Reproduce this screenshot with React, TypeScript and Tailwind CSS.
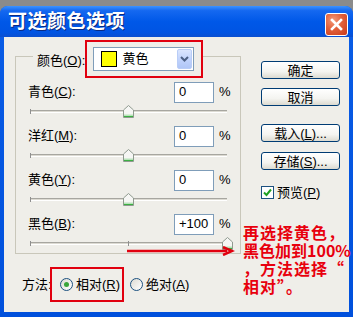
import React from "react";

const font = "font-['Liberation_Sans','Noto_Sans_CJK_SC',sans-serif]";

function Thumb() {
  return (
    <svg width="11" height="13" viewBox="0 0 11 13" className="block">
      <path d="M5.5 0.5 L10.5 5 L10.5 12.5 L0.5 12.5 L0.5 5 Z" fill="#f6f6f4" stroke="#8f9a8f" />
      <path d="M1 11 L10 11 L10 12 L1 12 Z" fill="#3cb043" />
      <path d="M1 9.5 L10 9.5 L10 11 L1 11 Z" fill="#b7e3b9" />
    </svg>
  );
}

function Slider({ pos, tick }: { pos: number; tick?: boolean }) {
  return (
    <div className="relative ml-[14px] w-[197px] h-[22px]">
      <div className="absolute left-0 right-0 top-[7px] h-[3px] border-t border-[#a7a6a0] border-b border-b-white bg-[#dcdad2]" />
      <div className="absolute left-0 top-[6px] w-px h-[5px] bg-[#8f8f8f]" />
      {tick && <div className="absolute left-[98px] top-[6px] w-px h-[5px] bg-[#8f8f8f]" />}
      <div className="absolute top-[2px]" style={{ left: pos - 5 }}>
        <Thumb />
      </div>
    </div>
  );
}

function Row({ label, u, rest, value, pos, tick }: { label: string; u: string; rest: string; value: string; pos: number; tick?: boolean }) {
  return (
    <div className="flex flex-col h-[44px]">
      <div className="flex items-center h-[22px] pl-[12px]">
        <div className="w-[146px] text-[13px] text-black">
          {label}(<span className="underline">{u}</span>){rest}
        </div>
        <div className="w-[40px] h-[21px] bg-white border border-[#7f9db9] flex items-center pl-[4px] text-[13px] text-black">
          {value}
        </div>
        <div className="ml-[5px] text-[13px] text-black">%</div>
      </div>
      <Slider pos={pos} tick={tick} />
    </div>
  );
}

function XpButton({ children }: { children: React.ReactNode }) {
  return (
    <div className="w-[79px] h-[18px] rounded-[3px] border border-[#003c74] bg-[linear-gradient(180deg,#ffffff_0%,#f4f4f0_60%,#dcdad0_100%)] flex items-center justify-center text-[13px] text-black leading-none">
      {children}
    </div>
  );
}

export default function App() {
  return (
    <div className={`w-[353px] h-[317px] bg-[#8b8b8b] overflow-hidden ${font}`}>
      <div className="mt-[6px] h-[311px] flex flex-col rounded-t-[8px] overflow-hidden bg-[linear-gradient(180deg,#0a5de6_0%,#0050dc_100%)]">
        {/* title bar */}
        <div className="h-[31px] shrink-0 flex items-center justify-between pl-[8px] pr-[5px] bg-[linear-gradient(180deg,#3d93ff_0%,#1568f0_15%,#0058e8_50%,#0054e3_85%,#0a4fd0_100%)]">
          <div className="text-white text-[19px] font-bold leading-none tracking-[0.5px] [text-shadow:1px_1px_0_#0a2a80]">可选颜色选项</div>
          <div className="mt-[6px] w-[23px] h-[23px] rounded-[3px] border border-white bg-[radial-gradient(circle_at_35%_30%,#f39a7a_0%,#e2603a_45%,#c8391a_100%)] flex items-center justify-center">
            <svg width="13" height="13" viewBox="0 0 13 13">
              <path d="M2 2 L11 11 M11 2 L2 11" stroke="white" strokeWidth="2.6" strokeLinecap="square" />
            </svg>
          </div>
        </div>

        {/* body */}
        <div className="flex-1 ml-[4px] mr-[4px] mb-[5px] bg-[#efeee9] flex relative">
          {/* left column */}
          <div className="flex flex-col pl-[11px]">
            <div className="relative mt-[19px] w-[226px] h-[198px] border border-[#c9c7ba] flex flex-col">
              {/* header */}
              <div className="flex items-center -mt-[17px] h-[38px]">
                <div className="ml-[17px] pl-[4px] pt-[4px] bg-[#efeee9] text-[13px] text-black leading-[16px]">
                  颜色(<span className="underline">O</span>):
                </div>
                <div className="w-[118px] h-[38px] border-2 border-[#e1000f] bg-[#efeee9] flex items-center pl-[6px]">
                  <div className="w-[101px] h-[24px] bg-white border border-[#7f9db9] flex items-center">
                    <div className="ml-[7px] w-[16px] h-[16px] bg-[#ffff00] border border-black" />
                    <div className="ml-[5px] text-[13px] text-black flex-1">黄色</div>
                    <div className="mr-px w-[15px] h-[20px] rounded-[2px] border border-[#b9cdf7] bg-[linear-gradient(180deg,#dbe6fe_0%,#c2d4fc_50%,#b0c6f7_100%)] flex items-center justify-center">
                      <svg width="9" height="6" viewBox="0 0 9 6">
                        <path d="M1 1 L4.5 4.5 L8 1" fill="none" stroke="#4d6185" strokeWidth="2" />
                      </svg>
                    </div>
                  </div>
                </div>
              </div>

              <div className="mt-[3px] flex flex-col">
                <Row label="青色" u="C" rest=":" value="0" pos={98} />
                <Row label="洋红" u="M" rest=":" value="0" pos={98} />
                <Row label="黄色" u="Y" rest=":" value="0" pos={98} />
                <Row label="黑色" u="B" rest=":" value="+100" pos={197} tick />
              </div>

              {/* red arrow annotation */}
              <svg className="absolute left-[111px] top-[189px]" width="108" height="10" viewBox="0 0 108 10">
                <path d="M0 5 L100 5" stroke="#e1000f" strokeWidth="2.5" />
                <path d="M96 1 L105 5 L96 9" fill="none" stroke="#e1000f" strokeWidth="2.5" />
              </svg>
            </div>

            {/* method row */}
            <div className="mt-[13px] flex items-center h-[35px] text-[13px] text-black whitespace-nowrap">
              <div className="ml-[7px] w-[28px]">方法:</div>
              <div className="w-[74px] h-[35px] border-2 border-[#e1000f] flex items-center pl-[8px]">
                <div className="w-[13px] h-[13px] rounded-full border border-[#1c5180] bg-[linear-gradient(135deg,#dcdad2,#ffffff)] flex items-center justify-center">
                  <div className="w-[5px] h-[5px] rounded-full bg-[#3aa53a]" />
                </div>
                <div className="ml-[3px]">
                  相对(<span className="underline">R</span>)
                </div>
              </div>
              <div className="ml-[6px] w-[13px] h-[13px] rounded-full border border-[#1c5180] bg-[linear-gradient(135deg,#dcdad2,#ffffff)]" />
              <div className="ml-[3px]">
                绝对(<span className="underline">A</span>)
              </div>
            </div>
          </div>

          {/* right column */}
          <div className="ml-[20px] flex flex-col">
            <div className="mt-[24px]">
              <XpButton>确定</XpButton>
            </div>
            <div className="mt-[9px]">
              <XpButton>取消</XpButton>
            </div>
            <div className="mt-[18px]">
              <XpButton>
                载入(<span className="underline">L</span>)...
              </XpButton>
            </div>
            <div className="mt-[10px]">
              <XpButton>
                存储(<span className="underline">S</span>)...
              </XpButton>
            </div>
            <div className="mt-[13px] flex items-center text-[13px] text-black">
              <div className="w-[13px] h-[13px] border border-[#1c5180] bg-white flex items-center justify-center">
                <svg width="9" height="9" viewBox="0 0 9 9">
                  <path d="M1 4.5 L3.5 7 L8 1.5" fill="none" stroke="#21a121" strokeWidth="2" />
                </svg>
              </div>
              <div className="ml-[3px]">
                预览(<span className="underline">P</span>)
              </div>
            </div>
          </div>

          {/* red text annotation */}
          <div className="absolute left-[239px] top-[186px] text-[#e8000d] text-[16px] font-bold leading-[18px] font-['Noto_Sans_CJK_SC',sans-serif] whitespace-nowrap">
            <div className="tracking-[1px]">再选择黄色，</div>
            <div>黑色加到100%</div>
            <div className="tracking-[1px]">，方法选择“</div>
            <div className="tracking-[1px]">相对”。</div>
          </div>
        </div>
      </div>
    </div>
  );
}
